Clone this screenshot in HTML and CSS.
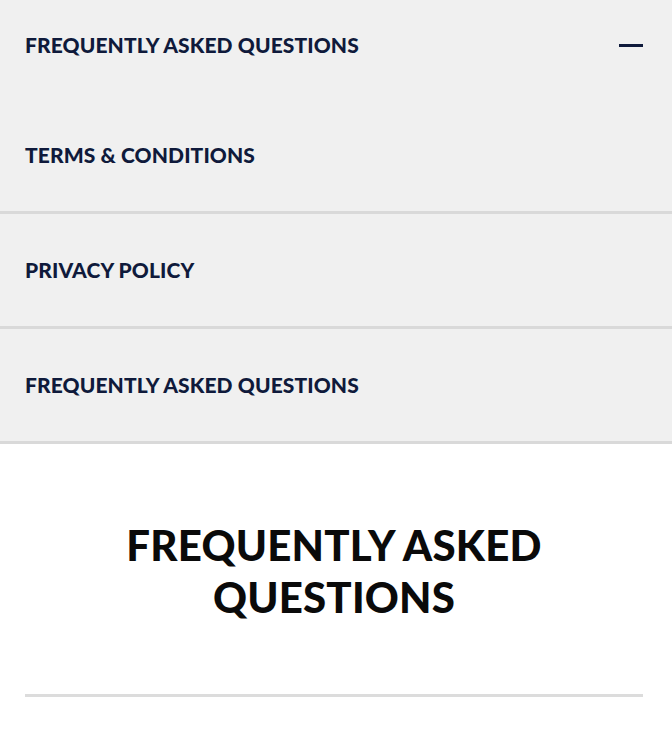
FILE: index.html
```html
<!DOCTYPE html>
<html lang="en">
<head>
<meta charset="utf-8">
<title>FAQ</title>
<link rel="stylesheet" href="styles.css">
</head>
<body>
<section class="accordion">
  <div class="acc-head">
    <span class="acc-title">FREQUENTLY ASKED QUESTIONS</span>
    <span class="minus" aria-hidden="true"></span>
  </div>
  <ul class="acc-list">
    <li class="acc-item">TERMS &amp; CONDITIONS</li>
    <li class="acc-item">PRIVACY POLICY</li>
    <li class="acc-item">FREQUENTLY ASKED QUESTIONS</li>
  </ul>
</section>
<section class="faq">
  <h1 class="faq-title">FREQUENTLY ASKED<br>QUESTIONS</h1>
  <hr class="faq-rule">
</section>
</body>
</html>
```

FILE: styles.css
```css
html, body {
  margin: 0;
  padding: 0;
  background: #ffffff;
}
body {
  font-family: "Lato", "Noto Sans", sans-serif;
  width: 672px;
}
.accordion {
  background: #f0f0f0;
}
.acc-head {
  height: 99px;
  box-sizing: border-box;
  padding: 0 29px 10px 25px;
  display: flex;
  align-items: center;
  justify-content: space-between;
}
.acc-title,
.acc-item {
  color: #0f1a3b;
  font-weight: 900;
  font-size: 21px;
  letter-spacing: 0.1px;
}
.minus {
  display: block;
  width: 24px;
  height: 3px;
  margin-top: 1px;
  background: #0f1a3b;
}
.acc-list {
  list-style: none;
  margin: 0;
  padding: 0;
}
.acc-item {
  height: 112px;
  padding-left: 25px;
  padding-bottom: 2px;
  box-sizing: content-box;
  display: flex;
  align-items: center;
  border-bottom: 3px solid #d9d9d9;
}
.acc-item {
  height: 110px;
}
.faq {
  padding: 75px 29px 0 25px;
}
.faq-title {
  margin: 0;
  text-align: center;
  color: #0a0a0a;
  font-weight: 900;
  font-size: 42px;
  line-height: 52px;
  letter-spacing: 0.2px;
}
.faq-rule {
  margin: 71px 0 0;
  border: 0;
  height: 3px;
  background: #dcdcdc;
}
```
